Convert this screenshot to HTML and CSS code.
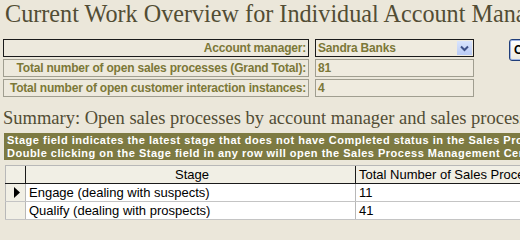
FILE: index.html
```html
<!DOCTYPE html>
<html>
<head>
<meta charset="utf-8">
<link rel="stylesheet" href="styles.css">
</head>
<body>
<div class="page">
  <h1 class="title">Current Work Overview for Individual Account Manager</h1>
  <div class="form">
    <div class="label focus">Account manager:</div>
    <div class="value combo">
      <span>Sandra Banks</span>
      <span class="drop"><svg width="15" height="15" viewBox="0 0 15 15"><path d="M4 5.5 L7.5 9 L11 5.5" fill="none" stroke="#3f5289" stroke-width="2"/></svg></span>
    </div>
    <button class="btn">Close</button>
    <div class="label">Total number of open sales processes (Grand Total):</div>
    <div class="value">81</div>
    <div></div>
    <div class="label">Total number of open customer interaction instances:</div>
    <div class="value">4</div>
    <div></div>
  </div>
  <h2 class="summary">Summary: Open sales processes by account manager and sales process stage</h2>
  <div class="banner">
    <div>Stage field indicates the latest stage that does not have Completed status in the Sales Process.</div>
    <div>Double clicking on the Stage field in any row will open the Sales Process Management Center.</div>
  </div>
  <table class="grid">
    <thead>
      <tr><th class="sel"></th><th class="stage">Stage</th><th class="total">Total Number of Sales Processes</th></tr>
    </thead>
    <tbody>
      <tr><td class="sel"><svg width="6" height="11" viewBox="0 0 6 11"><polygon points="0,0 6,5.5 0,11" fill="#000"/></svg></td><td>Engage (dealing with suspects)</td><td>11</td></tr>
      <tr><td class="sel"></td><td>Qualify (dealing with prospects)</td><td>41</td></tr>
    </tbody>
  </table>
</div>
</body>
</html>
```
FILE: styles.css
```css
html, body {
  margin: 0;
  padding: 0;
  background: #ebe7da;
  overflow: hidden;
}
.page {
  width: 760px;
  padding-top: 1px;
}
.title {
  margin: 0 0 12px 5px;
  font-family: "Liberation Serif", serif;
  font-weight: normal;
  font-size: 24.2px;
  line-height: 26px;
  color: #524d34;
  white-space: nowrap;
}
.form {
  display: grid;
  grid-template-columns: 306px 159px auto;
  grid-template-rows: 18px 18px 18px;
  column-gap: 6px;
  row-gap: 2px;
  margin-left: 3px;
  font-family: "Liberation Sans", Arial, sans-serif;
  font-weight: bold;
  font-size: 12px;
  letter-spacing: -0.2px;
  color: #7c7838;
}
.label, .value {
  box-sizing: border-box;
  height: 18px;
  line-height: 16px;
  border: 1px solid #a09e90;
  background: #ede9dd;
  white-space: nowrap;
}
.label {
  text-align: right;
  padding-right: 2px;
}
.value {
  padding-left: 2px;
  background: #efebdf;
}
.label.focus, .value.combo {
  border-color: #1a1a1a;
}
.value.combo {
  display: flex;
  justify-content: space-between;
  align-items: center;
  padding-right: 1px;
}
.drop {
  display: flex;
  width: 15px;
  height: 14px;
  background: linear-gradient(#dae5fd, #b9cbf5);
}
.drop svg { display: block; }
.btn {
  justify-self: start;
  align-self: start;
  margin-left: 29px;
  height: 22px;
  width: 70px;
  padding: 0 0 0 4px;
  text-align: left;
  border: 1px solid #1f3e7a;
  border-radius: 3px;
  background: linear-gradient(#ffffff, #ece9e0);
  box-shadow: inset 0 0 0 1px #9eb4e6;
  font-family: "Liberation Sans", Arial, sans-serif;
  font-weight: bold;
  font-size: 12px;
  color: #000;
}
.summary {
  margin: 10px 0 4px 3px;
  font-family: "Liberation Serif", serif;
  font-weight: normal;
  font-size: 18.5px;
  line-height: 22px;
  color: #524d34;
  white-space: nowrap;
}
.banner {
  margin-left: 4px;
  padding: 1px 0 0 3px;
  background: #7d7a42;
  color: #ffffff;
  font-family: "Liberation Sans", Arial, sans-serif;
  font-weight: bold;
  font-size: 11px;
  line-height: 13px;
  letter-spacing: 0.5px;
  white-space: nowrap;
}
.grid {
  margin: 5px 0 0 5px;
  border-collapse: collapse;
  font-family: "Liberation Sans", Arial, sans-serif;
  font-size: 13px;
  color: #000;
  background: #ffffff;
}
.grid th, .grid td {
  padding: 0 0 0 3px;
  height: 17px;
  line-height: 17px;
  white-space: nowrap;
  font-weight: normal;
  text-align: left;
  border-left: 1px solid #b8b8b8;
  border-bottom: 1px solid #c4c4c4;
}
.grid thead th {
  background: #f1efe5;
  border-top: 1px solid #b8b8b8;
  border-bottom: 1px solid #1a1a1a;
  border-left-color: #1a1a1a;
}
.grid thead th.sel { border-left-color: #b8b8b8; }
.grid th.stage { text-align: center; }
.grid .sel {
  width: 16px;
  background: #f1efe5;
  padding-left: 3px;
}
.grid td.sel svg { display: block; margin-left: 5px; }
.grid .stage { width: 326px; }
.grid .total { width: 220px; }
```
